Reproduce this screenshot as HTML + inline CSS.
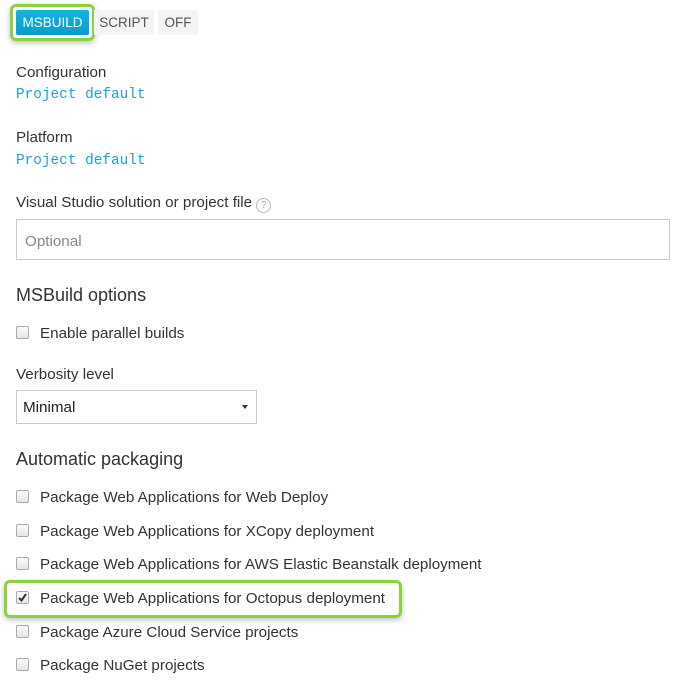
<!DOCTYPE html>
<html><head><meta charset="utf-8"><style>
body{margin:0;width:687px;height:687px;background:#fff;font-family:"Liberation Sans",sans-serif;color:#333;position:relative;overflow:hidden}
.a{position:absolute;white-space:nowrap}
.t{font-size:15.2px;line-height:18px}
.m{font-family:"Liberation Mono",monospace;font-size:14.4px;color:#1aa3d6;line-height:18px}
.btn{position:absolute;top:10px;height:25px;line-height:25px;font-size:13.5px;text-align:center;background:#f4f4f4;color:#555}
.cb{position:absolute;left:16px;width:11px;height:11px;border:1px solid #aaa;border-radius:2px;background:linear-gradient(#fafafa,#e6e6e6)}
.h{font-size:18px;line-height:22px}
.glow{position:absolute;border:3px solid #8cd23c;border-radius:6px;box-shadow:0 2px 6px rgba(0,0,0,.25)}
</style></head><body>
<div class="glow" style="left:10px;top:4px;width:79px;height:31px"></div>
<div class="btn" style="left:16px;width:73px;background:linear-gradient(#12b4e0,#0b9ccb);color:#fff;border-radius:2px">MSBUILD</div>
<div class="btn" style="left:94px;width:60px">SCRIPT</div>
<div class="btn" style="left:158px;width:40px">OFF</div>

<div class="a t" style="left:16px;top:64px">Configuration</div>
<div class="a m" style="left:16px;top:86px">Project default</div>
<div class="a t" style="left:16px;top:129px">Platform</div>
<div class="a m" style="left:16px;top:152px">Project default</div>
<div class="a t" style="left:16px;top:194px">Visual Studio solution or project file <span style="display:inline-block;width:13px;height:13px;border:1px solid #bbb;border-radius:50%;font-size:10px;line-height:13px;text-align:center;color:#aaa;vertical-align:-1px">?</span></div>
<div class="a" style="left:16px;top:219px;width:652px;height:39px;border:1px solid #ccc"></div>
<div class="a t" style="left:25px;top:233px;color:#888">Optional</div>
<div class="a h" style="left:16px;top:284px">MSBuild options</div>
<div class="cb" style="top:326px"></div>
<div class="a t" style="left:40px;top:325px">Enable parallel builds</div>
<div class="a t" style="left:16px;top:366px">Verbosity level</div>
<div class="a" style="left:16px;top:390px;width:239px;height:32px;border:1px solid #ccc"></div>
<div class="a t" style="left:23px;top:399px;color:#222">Minimal</div>
<div class="a" style="left:242px;top:405px;width:0;height:0;border-left:3px solid transparent;border-right:3px solid transparent;border-top:4px solid #333"></div>
<div class="a h" style="left:16px;top:448px">Automatic packaging</div>

<div class="glow" style="left:4px;top:580px;width:392px;height:32px"></div>
<div class="cb" style="top:490px"></div><div class="a t" style="left:40px;top:489px">Package Web Applications for Web Deploy</div>
<div class="cb" style="top:524px"></div><div class="a t" style="left:40px;top:523px">Package Web Applications for XCopy deployment</div>
<div class="cb" style="top:557px"></div><div class="a t" style="left:40px;top:556px">Package Web Applications for AWS Elastic Beanstalk deployment</div>
<div class="cb" style="top:591px"><svg width="11" height="11" style="position:absolute;left:0;top:0"><path d="M2 6 L4.5 8.5 L9 2" stroke="#333" stroke-width="2" fill="none"/></svg></div><div class="a t" style="left:40px;top:590px">Package Web Applications for Octopus deployment</div>
<div class="cb" style="top:625px"></div><div class="a t" style="left:40px;top:624px">Package Azure Cloud Service projects</div>
<div class="cb" style="top:658px"></div><div class="a t" style="left:40px;top:657px">Package NuGet projects</div>
</body></html>
